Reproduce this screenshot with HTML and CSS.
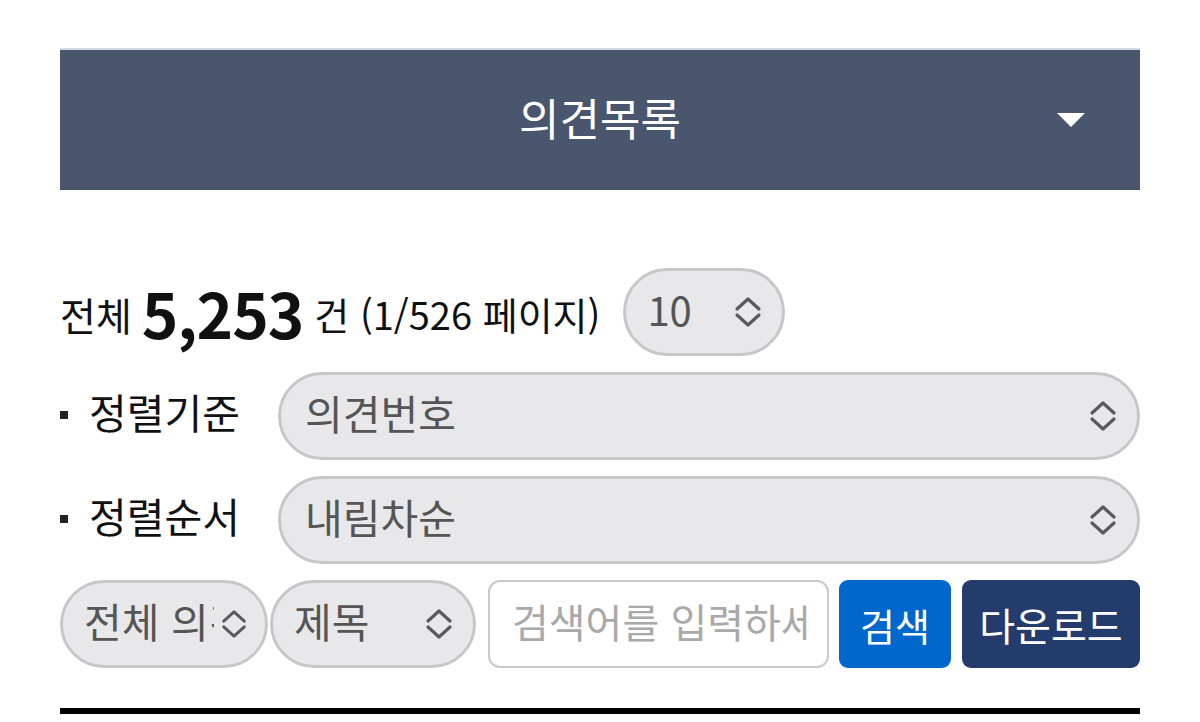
FILE: index.html
```html
<!DOCTYPE html>
<html lang="ko">
<head>
<meta charset="utf-8">
<title>의견목록</title>
<link rel="stylesheet" href="styles.css">
</head>
<body>
<div class="page">
  <div class="panel-head">
    <span class="panel-title">의견목록</span>
    <svg class="caret" width="28" height="14" viewBox="0 0 28 14"><path d="M0 0 H28 L14 14 Z" fill="#fff"/></svg>
  </div>

  <div class="summary">
    <span class="total-label">전체</span>
    <strong class="total-num">5,253</strong>
    <span class="total-rest">건 (1/526 페이지)</span>
    <div class="pill pill-size">
      <span class="pill-text">10</span>
      <svg class="chev" width="30" height="32" viewBox="0 0 30 32"><path d="M4 13 L15 3 L26 13 M4 19 L15 29 L26 19" fill="none" stroke="#5a5a5a" stroke-width="3.2" stroke-linecap="round" stroke-linejoin="round"/></svg>
    </div>
  </div>

  <div class="sort-row">
    <span class="sort-label"><i class="dot"></i>정렬기준</span>
    <div class="pill pill-wide">
      <span class="pill-text">의견번호</span>
      <svg class="chev" width="30" height="32" viewBox="0 0 30 32"><path d="M4 13 L15 3 L26 13 M4 19 L15 29 L26 19" fill="none" stroke="#5a5a5a" stroke-width="3.2" stroke-linecap="round" stroke-linejoin="round"/></svg>
    </div>
  </div>

  <div class="sort-row">
    <span class="sort-label"><i class="dot"></i>정렬순서</span>
    <div class="pill pill-wide">
      <span class="pill-text">내림차순</span>
      <svg class="chev" width="30" height="32" viewBox="0 0 30 32"><path d="M4 13 L15 3 L26 13 M4 19 L15 29 L26 19" fill="none" stroke="#5a5a5a" stroke-width="3.2" stroke-linecap="round" stroke-linejoin="round"/></svg>
    </div>
  </div>

  <div class="search-row">
    <div class="pill pill-cat">
      <span class="pill-text clip">전체 의견</span>
      <svg class="chev" width="28" height="32" viewBox="0 0 30 32"><path d="M4 13 L15 3 L26 13 M4 19 L15 29 L26 19" fill="none" stroke="#5a5a5a" stroke-width="3.2" stroke-linecap="round" stroke-linejoin="round"/></svg>
    </div>
    <div class="pill pill-field">
      <span class="pill-text">제목</span>
      <svg class="chev" width="30" height="32" viewBox="0 0 30 32"><path d="M4 13 L15 3 L26 13 M4 19 L15 29 L26 19" fill="none" stroke="#5a5a5a" stroke-width="3.2" stroke-linecap="round" stroke-linejoin="round"/></svg>
    </div>
    <div class="search-box"><span class="placeholder">검색어를 입력하세요</span></div>
    <button class="btn btn-search">검색</button>
    <button class="btn btn-down">다운로드</button>
  </div>

  <div class="rule"></div>
</div>
</body>
</html>
```

FILE: styles.css
```css
* { box-sizing: border-box; }
html, body { margin: 0; padding: 0; background: #fff; }
body {
  font-family: "Noto Sans CJK KR", "Noto Sans", sans-serif;
  color: #111;
}
.page {
  width: 1080px;
  margin: 0 60px;
  padding-top: 48px;
}
.panel-head {
  height: 142px;
  border-top: 2px solid #d2d9e4;
  background: #4a556e;
  display: flex;
  align-items: center;
  justify-content: center;
  position: relative;
}
.panel-title {
  color: #fff;
  font-size: 44px;
  font-weight: 400;
  position: relative;
  top: -3px;
}
.caret {
  position: absolute;
  right: 55px;
  top: 63px;
}
.summary {
  margin-top: 78px;
  height: 88px;
  display: flex;
  align-items: center;
}
.total-label {
  font-size: 39px;
  margin-right: 10px;
  line-height: 1.4;
  position: relative;
  top: 2px;
}
.total-num {
  font-size: 62px;
  font-weight: 700;
  line-height: 1.3;
  margin-right: 11px;
  letter-spacing: -1px;
}
.total-rest {
  font-size: 38px;
  line-height: 1.4;
  position: relative;
  top: 2px;
}
.pill {
  height: 88px;
  border: 3px solid #c7c7c9;
  border-radius: 44px;
  background: #e8e8ea;
  display: flex;
  align-items: center;
  padding: 0 19px 0 21px;
  color: #555;
  font-size: 41px;
}
.pill-text {
  flex: 1;
  white-space: nowrap;
  line-height: 1.5;
  position: relative;
  top: -3px;
}
.pill-text.clip { overflow: hidden; }
.chev { flex: none; margin-left: 4px; }
.pill-size {
  width: 162px;
  margin-left: 23px;
  font-size: 40px;
}
.sort-row {
  margin-top: 16px;
  display: flex;
  align-items: center;
}
.sort-label {
  width: 218px;
  font-size: 41px;
  font-weight: 400;
  line-height: 1.5;
  color: #111;
  display: flex;
  align-items: center;
  position: relative;
  top: -4px;
}
.dot {
  width: 8px;
  height: 8px;
  background: #222;
  margin-right: 21px;
  display: inline-block;
  position: relative;
  top: 3px;
}
.pill-wide {
  flex: 1;
  padding-left: 24px;
}
.search-row {
  margin-top: 16px;
  display: flex;
  align-items: center;
}
.pill-cat { width: 208px; padding-right: 17px; }
.pill-cat .pill-text { margin-right: 2px; }
.pill-field { width: 206px; margin-left: 2px; }
.search-box {
  width: 341px;
  height: 88px;
  margin-left: 12px;
  border: 2px solid #c9c9c9;
  border-radius: 12px;
  background: #fff;
  display: flex;
  align-items: center;
  padding-left: 22px;
  padding-right: 20px;
  overflow: hidden;
}
.placeholder {
  color: #a9a9a9;
  font-size: 40px;
  line-height: 1.5;
  white-space: nowrap;
  overflow: hidden;
  position: relative;
  top: -3px;
}
.btn {
  height: 88px;
  border: none;
  border-radius: 9px;
  color: #fff;
  font-family: "Noto Sans CJK KR", "Noto Sans", sans-serif;
  font-size: 38px;
  padding: 0;
}
.btn-search {
  width: 112px;
  margin-left: 10px;
  background: #0067cc;
}
.btn-down {
  width: 178px;
  margin-left: 11px;
  background: #233c6c;
  font-size: 39px;
}
.rule {
  margin-top: 40px;
  height: 6px;
  background: #000;
}
```
